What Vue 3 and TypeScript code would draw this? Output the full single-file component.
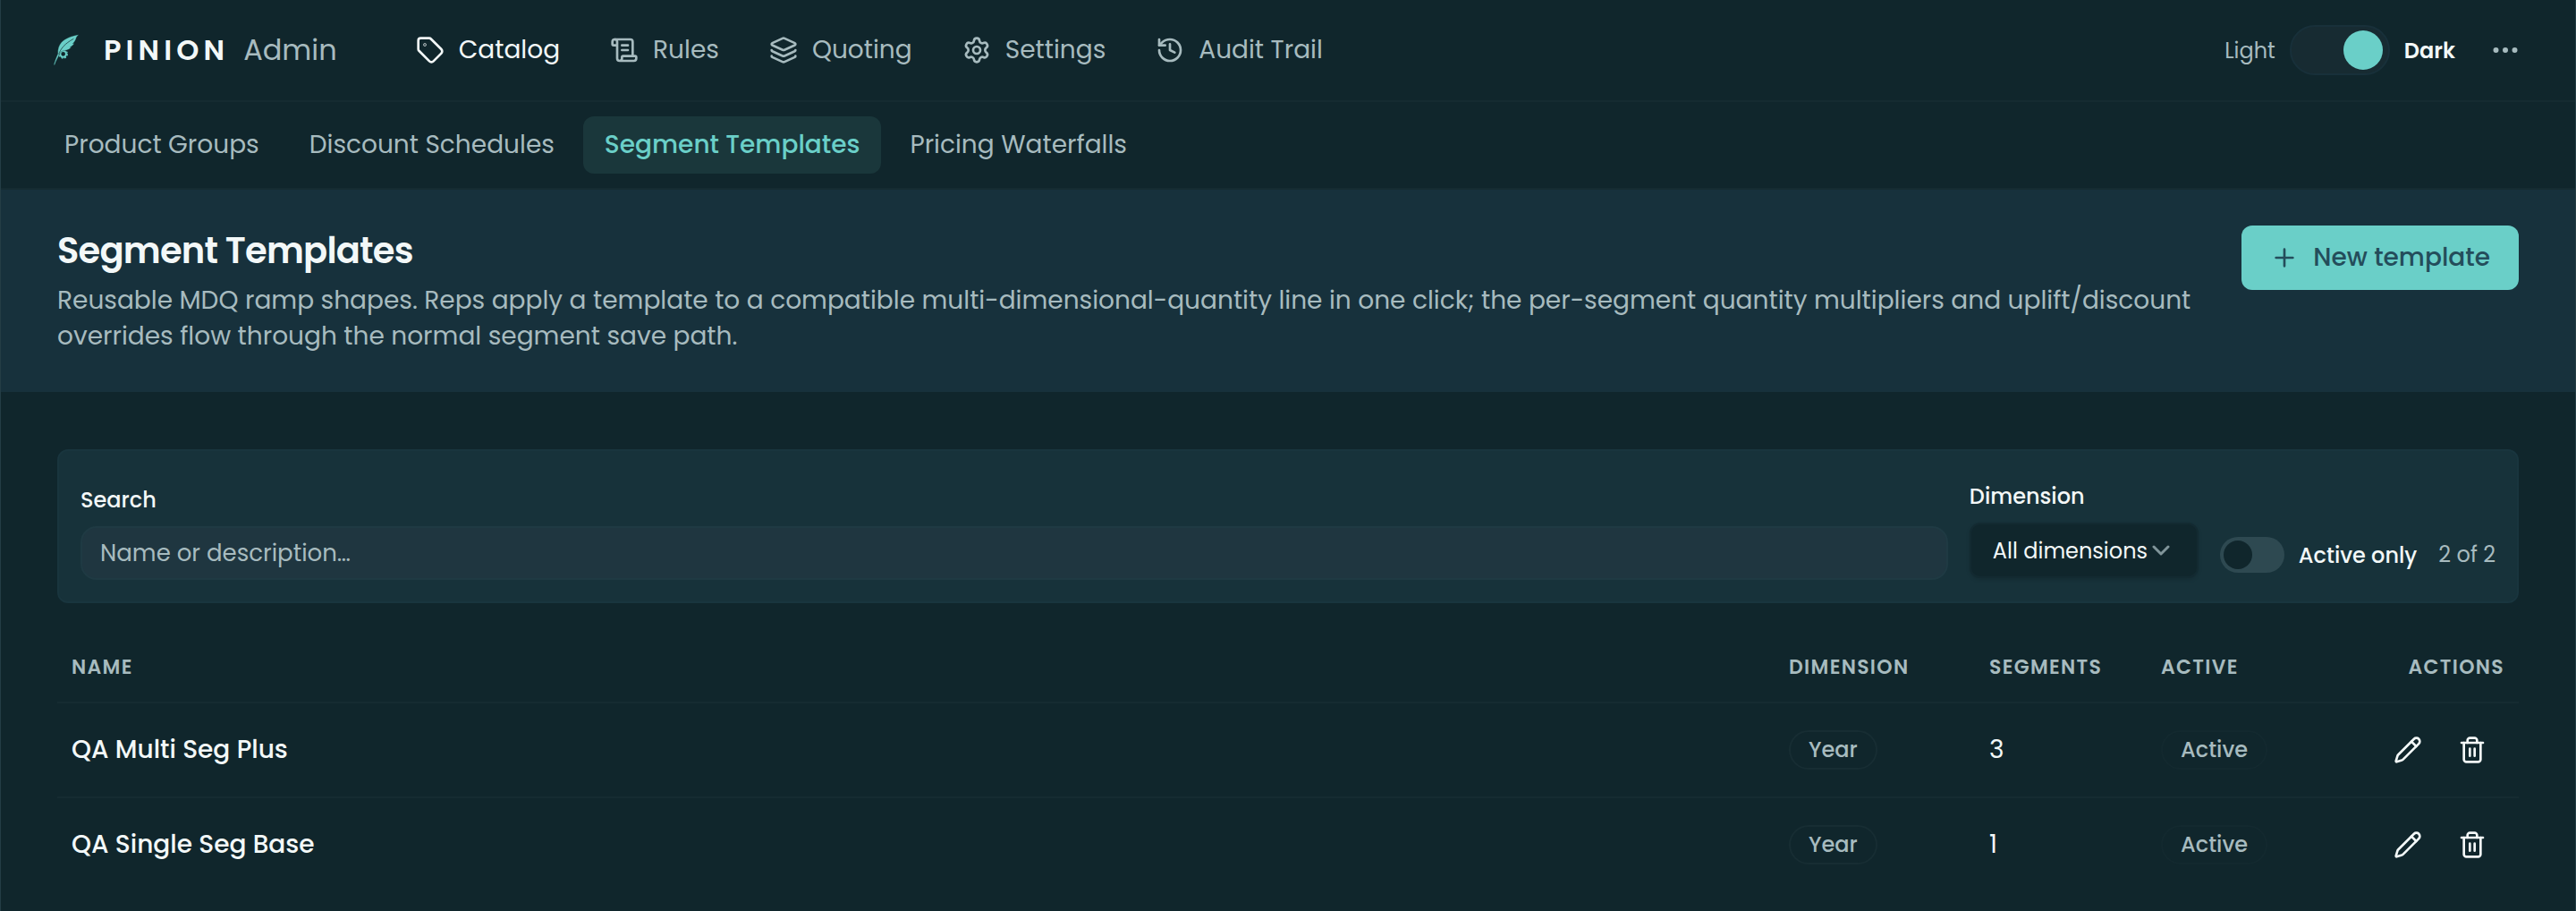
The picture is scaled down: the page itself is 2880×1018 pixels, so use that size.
<script setup lang="ts">
import { computed, ref } from 'vue'

interface NavItem {
  label: string
  icon: string[]
  active?: boolean
}

interface Template {
  name: string
  dimension: string
  segments: number
  active: boolean
}

const navItems: NavItem[] = [
  {
    label: 'Catalog',
    active: true,
    icon: [
      'M12.586 2.586A2 2 0 0 0 11.172 2H4a2 2 0 0 0-2 2v7.172a2 2 0 0 0 .586 1.414l8.704 8.704a2.426 2.426 0 0 0 3.42 0l6.58-6.58a2.426 2.426 0 0 0 0-3.42z',
      'M7.5 7.2a.3.3 0 1 1 0 .6.3.3 0 0 1 0-.6z',
    ],
  },
  {
    label: 'Rules',
    icon: [
      'M15 12h-5',
      'M15 8h-5',
      'M19 17V5a2 2 0 0 0-2-2H4',
      'M8 21h12a2 2 0 0 0 2-2v-1a1 1 0 0 0-1-1H11a1 1 0 0 0-1 1v1a2 2 0 1 1-4 0V5a2 2 0 1 0-4 0v2a1 1 0 0 0 1 1h3',
    ],
  },
  {
    label: 'Quoting',
    icon: [
      'M12.83 2.18a2 2 0 0 0-1.66 0L2.6 6.08a1 1 0 0 0 0 1.83l8.58 3.91a2 2 0 0 0 1.66 0l8.58-3.9a1 1 0 0 0 0-1.83z',
      'M2 12a1 1 0 0 0 .58.91l8.6 3.91a2 2 0 0 0 1.65 0l8.58-3.9A1 1 0 0 0 22 12',
      'M2 17a1 1 0 0 0 .58.91l8.6 3.91a2 2 0 0 0 1.65 0l8.58-3.9A1 1 0 0 0 22 17',
    ],
  },
  {
    label: 'Settings',
    icon: [
      'M9.671 4.136a2.34 2.34 0 0 1 4.659 0 2.34 2.34 0 0 0 3.319 1.915 2.34 2.34 0 0 1 2.33 4.033 2.34 2.34 0 0 0 0 3.831 2.34 2.34 0 0 1-2.33 4.033 2.34 2.34 0 0 0-3.319 1.915 2.34 2.34 0 0 1-4.659 0 2.34 2.34 0 0 0-3.32-1.915 2.34 2.34 0 0 1-2.33-4.033 2.34 2.34 0 0 0 0-3.831A2.34 2.34 0 0 1 6.35 6.051a2.34 2.34 0 0 0 3.319-1.915',
      'M12 9a3 3 0 1 1 0 6 3 3 0 0 1 0-6z',
    ],
  },
  {
    label: 'Audit Trail',
    icon: ['M3 12a9 9 0 1 0 9-9 9.75 9.75 0 0 0-6.74 2.74L3 8', 'M3 3v5h5', 'M12 7v5l4 2'],
  },
]

const tabs = ['Product Groups', 'Discount Schedules', 'Segment Templates', 'Pricing Waterfalls']
const currentTab = 'Segment Templates'

const templates: Template[] = [
  { name: 'QA Multi Seg Plus', dimension: 'Year', segments: 3, active: true },
  { name: 'QA Single Seg Base', dimension: 'Year', segments: 1, active: true },
]

const dark = ref(true)
const search = ref('')
const dimension = ref('')
const activeOnly = ref(false)

const visible = computed(() =>
  templates.filter(
    (t) =>
      t.name.toLowerCase().includes(search.value.toLowerCase()) &&
      (!dimension.value || t.dimension === dimension.value) &&
      (!activeOnly.value || t.active),
  ),
)
</script>

<template>
  <div class="page">
    <header class="topbar">
      <a class="brand" href="#">
        <svg class="logo" viewBox="56 54 92 108" aria-hidden="true">
          <circle cx="92" cy="121" r="10" fill="none" stroke="currentColor" stroke-width="6" />
          <circle
            cx="92"
            cy="121"
            r="14"
            fill="none"
            stroke="currentColor"
            stroke-width="4"
            stroke-dasharray="6 5"
          />
          <path
            fill="currentColor"
            stroke="#10262c"
            stroke-width="1"
            d="M144 56C122 60 98 68 86 82c-9 10-13 24-12 38-5 12-10 24-14 38l4-1c3-10 7-18 12-27 2-6 4-11 8-16 6-4 12-4 20-6 8-2 12-5 16-11l-5 1c7-3 11-7 14-13l-5 1c7-6 10-12 12-20 2-4 5-7 8-10z"
          />
          <path fill="none" stroke="#10262c" stroke-width="2" d="M77 122c6-18 20-36 50-52" />
        </svg>
        <span class="brand-name">PINION</span>
        <span class="brand-area">Admin</span>
      </a>

      <nav class="main-nav" aria-label="Main">
        <a
          v-for="item in navItems"
          :key="item.label"
          href="#"
          class="main-link"
          :class="{ active: item.active }"
        >
          <svg class="icon" viewBox="0 0 24 24" aria-hidden="true">
            <path v-for="d in item.icon" :key="d" :d="d" />
          </svg>
          {{ item.label }}
        </a>
      </nav>

      <div class="theme">
        <span class="theme-off">Light</span>
        <input v-model="dark" class="theme-switch" type="checkbox" aria-label="Dark theme" />
        <span class="theme-on">Dark</span>
      </div>
      <button class="more" type="button" aria-label="More options">
        <svg class="icon more-icon" viewBox="0 0 24 24" aria-hidden="true">
          <circle cx="5" cy="12" r="1" />
          <circle cx="12" cy="12" r="1" />
          <circle cx="19" cy="12" r="1" />
        </svg>
      </button>
    </header>

    <nav class="tabs" aria-label="Catalog">
      <a v-for="tab in tabs" :key="tab" href="#" class="tab" :class="{ active: tab === currentTab }">{{
        tab
      }}</a>
    </nav>

    <section class="intro">
      <div class="intro-text">
        <h1>Segment Templates</h1>
        <p>
          Reusable MDQ ramp shapes. Reps apply a template to a compatible multi-dimensional-quantity
          line in one click; the per-segment quantity multipliers and uplift/discount overrides flow
          through the normal segment save path.
        </p>
      </div>
      <button class="primary" type="button">
        <svg class="icon" viewBox="0 0 24 24" aria-hidden="true">
          <path d="M5 12h14M12 5v14" />
        </svg>
        New template
      </button>
    </section>

    <main class="content">
      <form class="filters" @submit.prevent>
        <div class="field grow">
          <label for="search">Search</label>
          <input id="search" v-model="search" type="text" placeholder="Name or description…" />
        </div>
        <div class="field dimension">
          <label for="dimension">Dimension</label>
          <div class="select-wrap">
            <select id="dimension" v-model="dimension">
              <option value="">All dimensions</option>
              <option value="Year">Year</option>
            </select>
            <svg class="chevron" viewBox="0 0 20 12" aria-hidden="true">
              <path d="M2 2l8 8 8-8" />
            </svg>
          </div>
        </div>
        <div class="active-only">
          <input id="active-only" v-model="activeOnly" class="switch" type="checkbox" />
          <label for="active-only">Active only</label>
        </div>
        <output class="count">{{ visible.length }} of {{ templates.length }}</output>
      </form>

      <table>
        <thead>
          <tr>
            <th>Name</th>
            <th class="col-dimension">Dimension</th>
            <th class="col-segments">Segments</th>
            <th class="col-active">Active</th>
            <th class="col-actions">Actions</th>
          </tr>
        </thead>
        <tbody>
          <tr v-for="t in visible" :key="t.name">
            <td class="name">{{ t.name }}</td>
            <td><span class="badge">{{ t.dimension }}</span></td>
            <td>{{ t.segments }}</td>
            <td><span class="badge faint">{{ t.active ? 'Active' : 'Inactive' }}</span></td>
            <td>
              <div class="actions">
                <button type="button" :aria-label="`Edit ${t.name}`">
                  <svg class="icon" viewBox="0 0 24 24" aria-hidden="true">
                    <path
                      d="M21.174 6.812a1 1 0 0 0-3.986-3.987L3.842 16.174a2 2 0 0 0-.5.83l-1.321 4.352a.5.5 0 0 0 .623.622l4.353-1.32a2 2 0 0 0 .83-.497z"
                    />
                    <path d="m15 5 4 4" />
                  </svg>
                </button>
                <button type="button" :aria-label="`Delete ${t.name}`">
                  <svg class="icon" viewBox="0 0 24 24" aria-hidden="true">
                    <path d="M3 6h18" />
                    <path d="M19 6v14c0 1-1 2-2 2H7c-1 0-2-1-2-2V6" />
                    <path d="M8 6V4c0-1 1-2 2-2h4c1 0 2 1 2 2v2" />
                    <path d="M10 11v6M14 11v6" />
                  </svg>
                </button>
              </div>
            </td>
          </tr>
        </tbody>
      </table>
    </main>
  </div>
</template>

<style>
body {
  background: #10262c;
}
</style>

<style scoped>
.page {
  --bg: #10262c;
  --line: #152b31;
  --text: #f3f8f8;
  --muted: #a7bbbf;
  --teal: #6acfc8;
  box-sizing: border-box;
  min-height: 100vh;
  border: solid #243d45;
  border-width: 0 1px;
  background: var(--bg);
  color: var(--text);
  font-family: Poppins, Inter, sans-serif;
  font-size: 28px;
}

.page *,
.page *::before {
  box-sizing: border-box;
}

a {
  color: inherit;
  text-decoration: none;
}

button,
input,
select {
  margin: 0;
  font: inherit;
  color: inherit;
}

.icon {
  width: 32px;
  height: 32px;
  flex: none;
  fill: none;
  stroke: currentColor;
  stroke-width: 2;
  stroke-linecap: round;
  stroke-linejoin: round;
}

.topbar {
  display: flex;
  align-items: center;
  height: 114px;
  padding: 0 58px 0 57px;
  border-bottom: 2px solid var(--line);
}

.brand {
  display: flex;
  align-items: center;
}

.logo {
  width: 32px;
  height: 36px;
  margin-right: 26px;
  color: var(--teal);
}

.brand-name {
  margin-right: 16px;
  font-size: 32px;
  font-weight: 600;
  letter-spacing: 0.16em;
}

.brand-area {
  font-size: 32px;
  color: var(--muted);
}

.main-nav {
  display: flex;
  gap: 56px;
  margin: 0 auto 0 88px;
}

.main-link {
  display: flex;
  align-items: center;
  gap: 16px;
  color: var(--muted);
}

.main-link.active {
  color: var(--text);
}

.theme {
  display: flex;
  align-items: center;
  gap: 16px;
  font-size: 24px;
}

.theme-off {
  color: var(--muted);
}

.theme-on {
  font-weight: 600;
}

.theme-switch {
  display: flex;
  align-items: center;
  justify-content: flex-end;
  width: 112px;
  height: 56px;
  padding: 0 6px;
  border: 2px solid #18303a;
  border-radius: 28px;
  background: #172b32;
  appearance: none;
}

.theme-switch::before {
  content: '';
  width: 44px;
  height: 44px;
  border-radius: 50%;
  background: var(--teal);
}

.theme-switch:not(:checked) {
  justify-content: flex-start;
}

.more {
  display: flex;
  margin-left: 36px;
  padding: 2px;
  border: 0;
  background: none;
  color: var(--muted);
}

.more-icon {
  width: 36px;
  height: 36px;
}

.tabs {
  display: flex;
  gap: 8px;
  padding: 16px 47px;
  border-bottom: 2px solid var(--line);
}

.tab {
  padding: 0 24px;
  border-radius: 12px;
  line-height: 64px;
  color: var(--muted);
}

.tab.active {
  background: #1a373b;
  color: var(--teal);
  font-weight: 500;
}

.intro {
  display: flex;
  align-items: flex-start;
  gap: 24px;
  padding: 40px 63px 42px;
  background: #17313c;
}

.intro-text {
  flex: 1;
}

h1 {
  margin: 0;
  font-size: 40px;
  line-height: 56px;
  font-weight: 600;
  letter-spacing: -0.02em;
}

.intro p {
  margin: 8px 0 0;
  line-height: 40px;
  color: var(--muted);
}

.primary {
  display: flex;
  align-items: center;
  gap: 16px;
  height: 72px;
  padding: 0 32px;
  border: 0;
  border-radius: 12px;
  background: var(--teal);
  color: #244d5b;
  font-weight: 500;
}

.content {
  padding: 64px 63px 16px;
}

.filters {
  display: flex;
  align-items: flex-end;
  gap: 24px;
  padding: 34px 24px 24px;
  border: 2px solid #19353e;
  border-radius: 12px;
  background: #17323a;
  font-size: 24px;
}

.field {
  display: flex;
  flex-direction: column;
  gap: 12px;
}

.field label {
  line-height: 34px;
  font-weight: 500;
}

.grow {
  flex: 1;
}

.field input {
  width: 100%;
  height: 60px;
  padding: 0 20px;
  border: 2px solid #1f3a43;
  border-radius: 18px;
  background: #1f3640;
  font-size: 26px;
}

.field input::placeholder {
  color: var(--muted);
  opacity: 1;
}

.dimension {
  width: 256px;
  padding-bottom: 2px;
}

.select-wrap {
  position: relative;
  display: flex;
}

.select-wrap select {
  width: 100%;
  height: 62px;
  padding: 0 48px 0 24px;
  border: 2px solid #132a31;
  border-radius: 12px;
  background: var(--bg);
  box-shadow: 0 2px 4px rgba(0, 0, 0, 0.12);
  appearance: none;
}

.chevron {
  position: absolute;
  top: 25px;
  right: 32px;
  width: 20px;
  height: 12px;
  fill: none;
  stroke: #80959a;
  stroke-width: 3;
  stroke-linecap: round;
  stroke-linejoin: round;
  pointer-events: none;
}

.active-only {
  display: flex;
  align-items: center;
  gap: 16px;
  height: 56px;
  font-weight: 500;
}

.switch {
  display: flex;
  align-items: center;
  width: 72px;
  height: 40px;
  padding: 0 4px;
  border-radius: 20px;
  background: #2e4951;
  appearance: none;
}

.switch::before {
  content: '';
  width: 32px;
  height: 32px;
  border-radius: 50%;
  background: var(--bg);
}

.switch:checked {
  justify-content: flex-end;
  background: var(--teal);
}

.count {
  line-height: 56px;
  color: var(--muted);
}

table {
  width: 100%;
  margin-top: 32px;
  border-collapse: separate;
  border-spacing: 0;
  table-layout: fixed;
}

th,
td {
  padding: 0 16px;
  text-align: left;
}

th {
  height: 80px;
  border-bottom: 2px solid var(--line);
  font-size: 22px;
  font-weight: 600;
  letter-spacing: 0.06em;
  text-transform: uppercase;
  color: var(--muted);
}

td {
  height: 106px;
  border-bottom: 2px solid var(--line);
}

tbody tr:last-child td {
  height: 104px;
  border-bottom: 0;
}

.name {
  font-weight: 500;
}

.col-dimension {
  width: 224px;
}

.col-segments {
  width: 192px;
}

.col-active {
  width: 176px;
}

.col-actions {
  width: 240px;
  text-align: right;
}

.badge {
  display: inline-block;
  padding: 0 20px;
  border: 2px solid #172d33;
  border-radius: 22px;
  font-size: 24px;
  line-height: 40px;
  font-weight: 500;
  color: var(--muted);
  vertical-align: middle;
}

.badge.faint {
  border-color: #13292f;
}

.actions {
  display: flex;
  justify-content: flex-end;
}

.actions button {
  display: flex;
  padding: 20px;
  border: 0;
  background: none;
}
</style>
